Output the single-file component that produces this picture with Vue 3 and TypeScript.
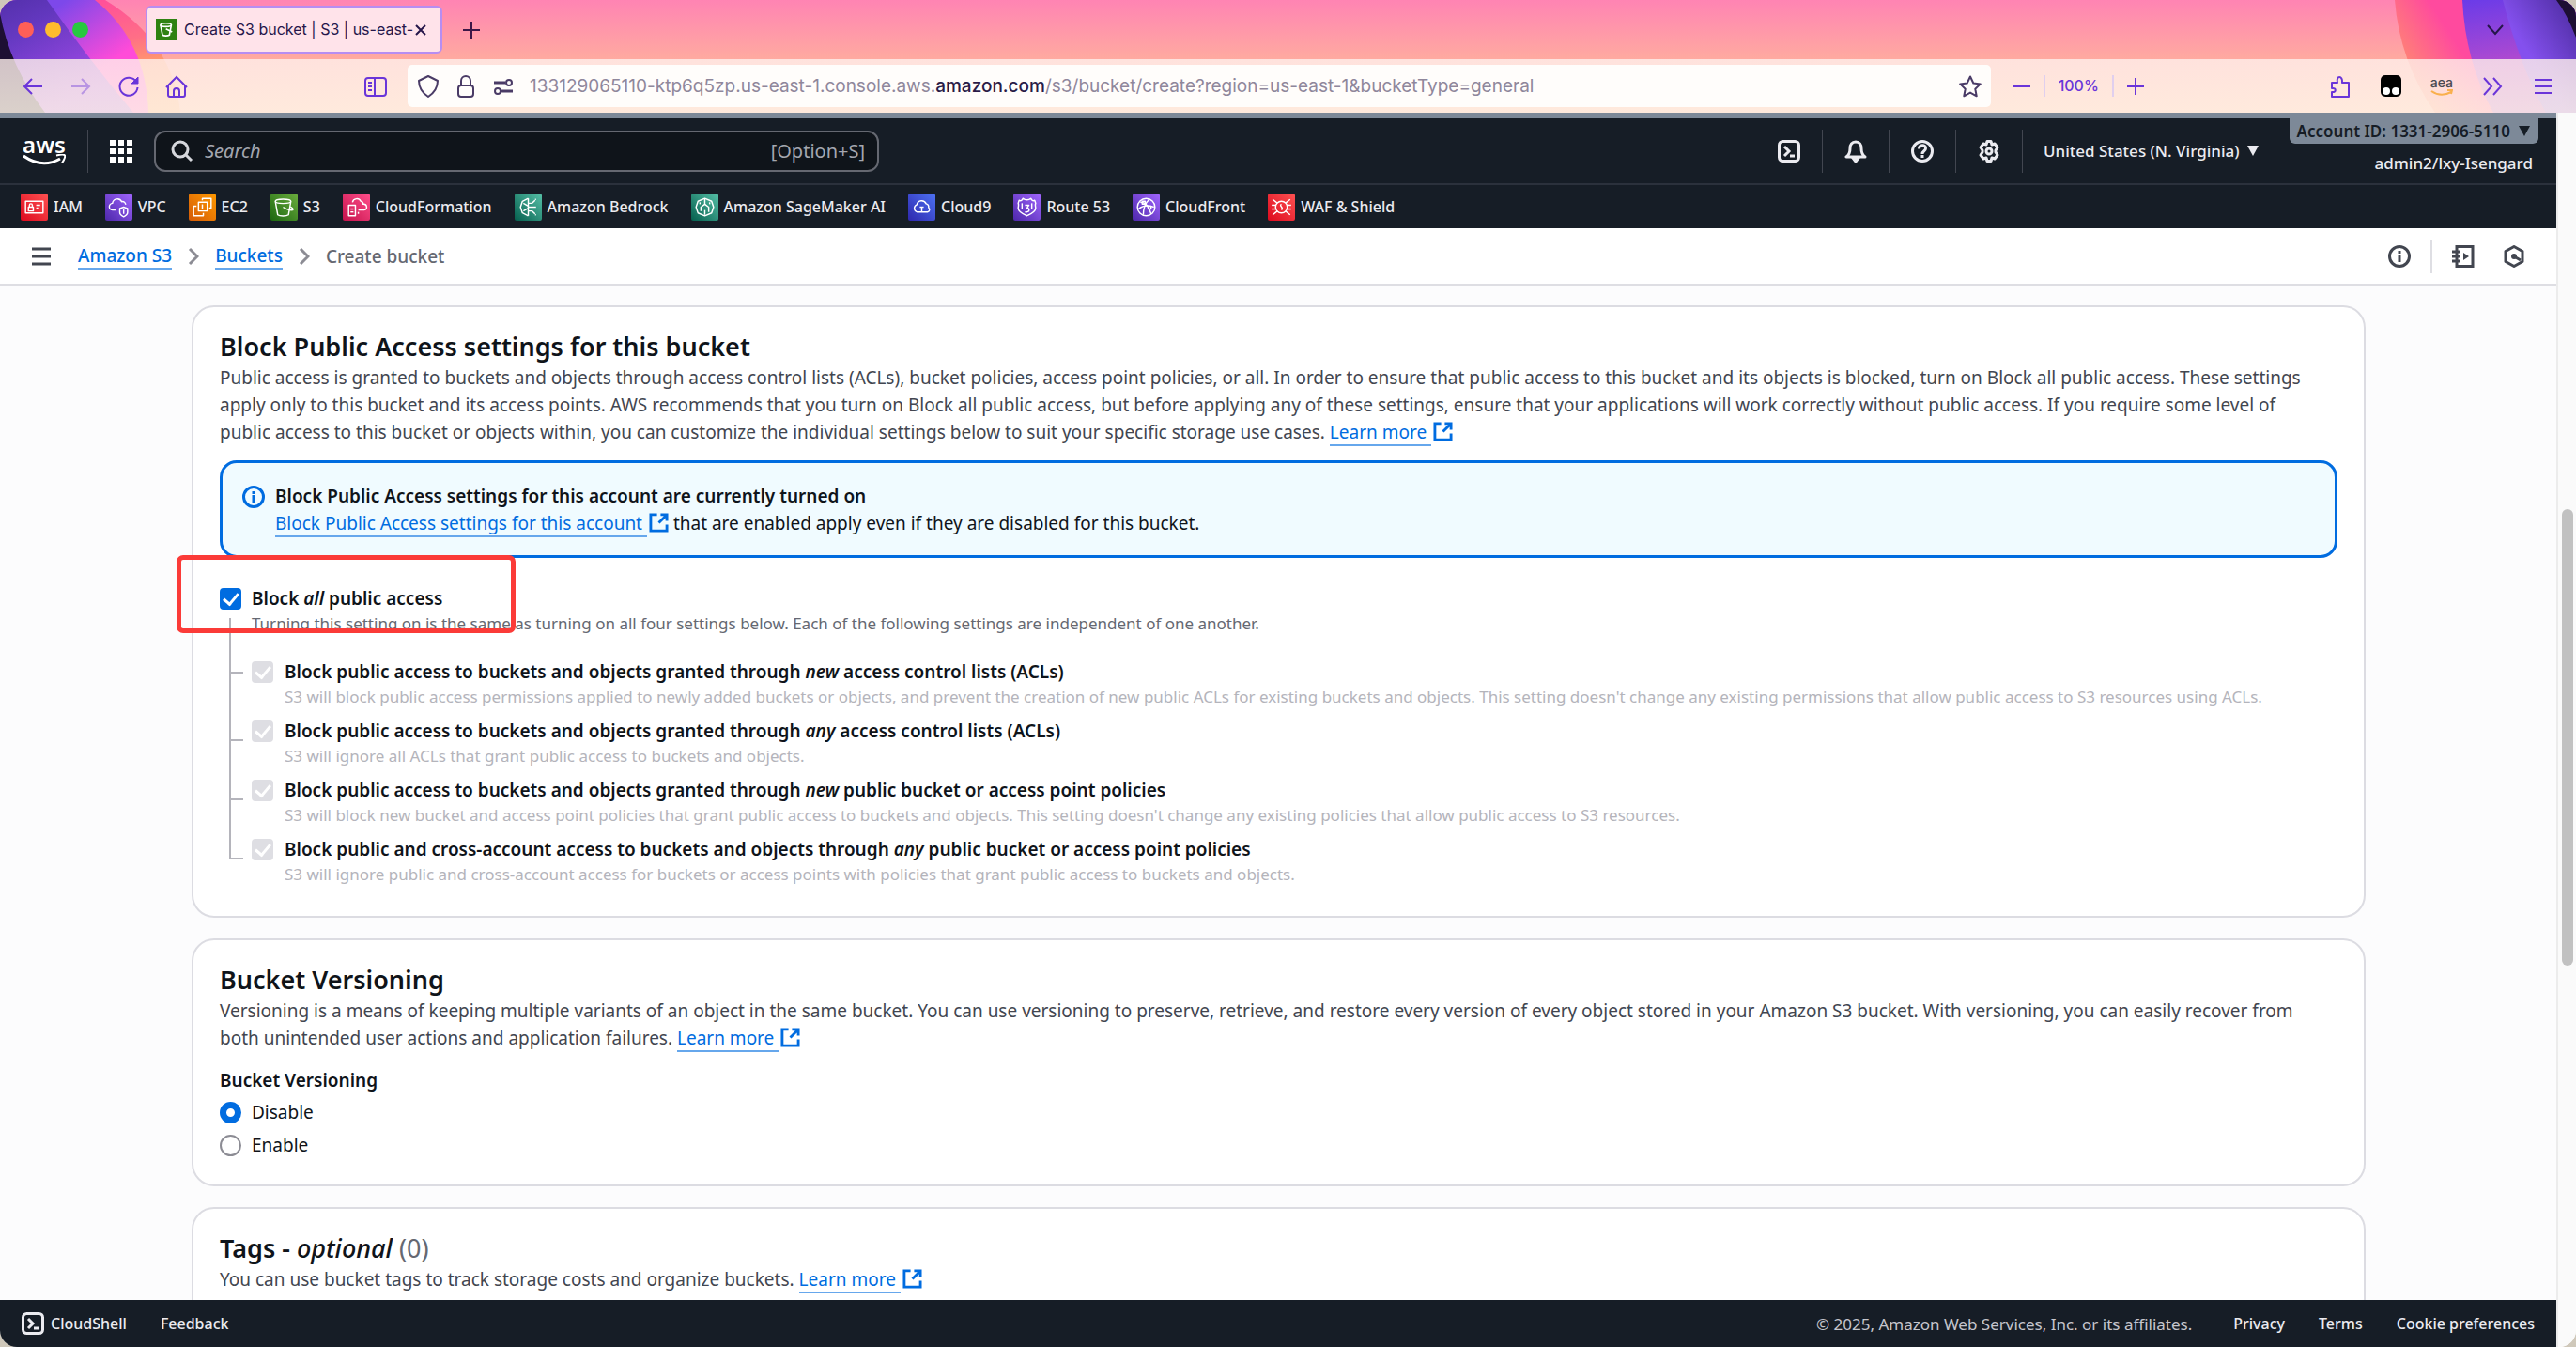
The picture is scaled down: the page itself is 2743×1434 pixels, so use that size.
<script setup lang="ts">
import { ref } from 'vue'

interface Service {
  name: string
  from: string
  to: string
  paths: string[]
}

interface Rule {
  id: string
  before: string
  em: string
  after: string
  note: string
}

const services: Service[] = [
  { name: 'IAM', from: '#ff5252', to: '#dd0a1e', paths: ['M5 8h18v12H5z', 'M8 14h5v4H8z', 'M9 14v-2a1.500 1.500 0 0 1 3 0v2', 'M16 12h4', 'M16 15h2'] },
  { name: 'VPC', from: '#a166ff', to: '#4d27aa', paths: ['M11 17H8a3.500 3.500 0 0 1-.5-7 5 5 0 0 1 9.500-1.500 3 3 0 0 1 4 3', 'M19 14l4 1.500v4c0 2-2 3.500-4 4.500-2-1-4-2.500-4-4.500v-4z', 'M19 16v5'] },
  { name: 'EC2', from: '#ff9900', to: '#d45b07', paths: ['M10 9h9v9h-9z', 'M8 13H5v10h10v-3', 'M14 7V5h9v10h-2', 'M14 11v5'] },
  { name: 'S3', from: '#6cae3e', to: '#1b660f', paths: ['M5 8l2.500 14c2 1.500 9 1.500 11 0L21 8', 'M5 8c0-3 16-3 16 0s-16 3-16 0', 'M13 14c3 2 7 3.500 10 3 1-1-1-2.500-2.500-3.500'] },
  { name: 'CloudFormation', from: '#ff4f8b', to: '#c5124c', paths: ['M6 12h7v11H6z', 'M8 16h3', 'M8 19h3', 'M10 9a4.500 4.500 0 0 1 8.500-1A3 3 0 0 1 21 11a3 3 0 0 1 1 6h-6', 'M16 19v2'] },
  { name: 'Amazon Bedrock', from: '#56c0a7', to: '#055f4e', paths: ['M14 5v18', 'M14 5l-6 3-2 6 2 6 6 3', 'M9 10l5 3', 'M9 18l5-3', 'M14 10h4l3-3', 'M14 14h8', 'M14 18h4l3 3', 'M21 6h1', 'M21 22h1'] },
  { name: 'Amazon SageMaker AI', from: '#56c0a7', to: '#055f4e', paths: ['M14 5l7 3 2 6-2 6-7 3-7-3-2-6 2-6z', 'M14 5v6l-4 3v4', 'M14 11l4 3v5', 'M9 9v2', 'M19 9v2', 'M14 17v5'] },
  { name: 'Cloud9', from: '#4d72f3', to: '#2e27ad', paths: ['M9 19a4 4 0 0 1 0-7.500 5 5 0 0 1 9.500-1 3.500 3.500 0 0 1 2.500 4 2.500 2.500 0 0 1-1 4.500z', 'M14 14v5', 'M12 14h4'] },
  { name: 'Route 53', from: '#a166ff', to: '#4d27aa', paths: ['M6 7c2 1 3 0 4-2 2 2 6 2 8 0 1 2 2 3 4 2l1 3c-1 2 0 3 0 5 0 4-5 6-9 8-4-2-9-4-9-8 0-2 1-3 0-5z', 'M12 12h4l-2 3c3 0 3 4 0 4h-2', 'M9 10v6', 'M19 10v6'] },
  { name: 'CloudFront', from: '#a166ff', to: '#4d27aa', paths: ['M14 5a9 9 0 1 1 0 18 9 9 0 0 1 0-18', 'M8 9c5 0 9 5 11 12', 'M17 6c-3 3-6 8-6 16', 'M6 16c5-4 11-4 16-2', 'M16 13h3v3h-3z', 'M10 8h3v3h-3z'] },
  { name: 'WAF & Shield', from: '#ff5252', to: '#dd0a1e', paths: ['M14 8a6 6 0 1 1 0 12 6 6 0 0 1 0-12', 'M14 11c-3 2 3 3 0 6', 'M5 6l5 4', 'M23 6l-5 4', 'M5 22l5-4', 'M23 22l-5-4', 'M4 12h4', 'M4 16h4', 'M20 12h4', 'M20 16h4'] },
]

const rules: Rule[] = [
  {
    id: 'new-acl',
    before: 'Block public access to buckets and objects granted through ',
    em: 'new',
    after: ' access control lists (ACLs)',
    note: "S3 will block public access permissions applied to newly added buckets or objects, and prevent the creation of new public ACLs for existing buckets and objects. This setting doesn't change any existing permissions that allow public access to S3 resources using ACLs.",
  },
  {
    id: 'any-acl',
    before: 'Block public access to buckets and objects granted through ',
    em: 'any',
    after: ' access control lists (ACLs)',
    note: 'S3 will ignore all ACLs that grant public access to buckets and objects.',
  },
  {
    id: 'new-policy',
    before: 'Block public access to buckets and objects granted through ',
    em: 'new',
    after: ' public bucket or access point policies',
    note: "S3 will block new bucket and access point policies that grant public access to buckets and objects. This setting doesn't change any existing policies that allow public access to S3 resources.",
  },
  {
    id: 'any-policy',
    before: 'Block public and cross-account access to buckets and objects through ',
    em: 'any',
    after: ' public bucket or access point policies',
    note: 'S3 will ignore public and cross-account access for buckets or access points with policies that grant public access to buckets and objects.',
  },
]

const blockAll = ref(true)
const versioning = ref('disable')
const query = ref('')
</script>

<template>
  <div class="window">
    <header class="chrome">
      <svg class="decor left" viewBox="0 0 200 120" aria-hidden="true">
        <defs>
          <linearGradient id="dl1" x1="0.55" y1="0" x2="0.75" y2="0.6"><stop offset="0" stop-color="#ff4f9a" /><stop offset="0.6" stop-color="#ff6f86" /><stop offset="1" stop-color="#ff9a6c" /></linearGradient>
          <linearGradient id="dl2" x1="0.35" y1="0" x2="0.8" y2="0.5"><stop offset="0.1" stop-color="#7d48ea" /><stop offset="1" stop-color="#ff4bd8" /></linearGradient>
          <linearGradient id="dl3" x1="0" y1="0" x2="0.5" y2="0.9"><stop offset="0" stop-color="#4a2a9c" /><stop offset="1" stop-color="#8a4cf0" /></linearGradient>
        </defs>
        <path d="M0 0H112Q184 44 192 120H0z" fill="url(#dl1)" />
        <path d="M0 0H101Q156 44 158 120H0z" fill="url(#dl2)" />
        <path d="M0 0H50Q92 60 142 120H0z" fill="url(#dl3)" opacity="0.8" />
        <path d="M0 14Q10 70 48 120H0z" fill="#1d0f33" />
      </svg>
      <svg class="decor right" viewBox="0 0 200 120" aria-hidden="true">
        <defs>
          <linearGradient id="dr1" x1="0" y1="0.4" x2="1" y2="0"><stop offset="0" stop-color="#ff8276" /><stop offset="0.3" stop-color="#ff4a9e" /></linearGradient>
          <linearGradient id="dr2" x1="0" y1="0" x2="0.1" y2="0.6"><stop offset="0" stop-color="#6a3be8" /><stop offset="1" stop-color="#b04ad0" /></linearGradient>
          <linearGradient id="dr3" x1="1" y1="0" x2="0.3" y2="0.7"><stop offset="0" stop-color="#4a2a9c" /><stop offset="0.8" stop-color="#8450ee" /></linearGradient>
        </defs>
        <path d="M7 0Q12 65 50 120H200V0z" fill="url(#dr1)" />
        <path d="M79 0Q82 65 112 120H200V0z" fill="url(#dr2)" />
        <path d="M122 0Q140 70 168 120H200V0z" fill="url(#dr3)" />
        <path d="M179 0Q190 14 200 40V0z" fill="#1d0f33" />
      </svg>

      <div class="tabs">
        <div class="lights"><i class="red" /><i class="amber" /><i class="green" /></div>
        <div class="tab">
          <svg class="favicon" viewBox="0 0 28 28"><rect width="28" height="28" fill="#2f8212" /><g fill="none" stroke="#fff" stroke-width="2"><path d="M6 8l2.500 13c2 1.500 7 1.500 9 0L20 8" /><path d="M6 8c0-3 14-3 14 0s-14 3-14 0M13 13l8 4" /></g></svg>
          <span class="tab-title">Create S3 bucket | S3 | us-east-</span>
          <button class="bare" aria-label="Close tab"><svg width="14" height="14" viewBox="0 0 14 14"><path d="M2 2l10 10M12 2L2 12" stroke="#26164a" stroke-width="2" /></svg></button>
        </div>
        <button class="bare" aria-label="New tab"><svg width="18" height="18" viewBox="0 0 18 18"><path d="M9 0v18M0 9h18" stroke="#3c1747" stroke-width="2" /></svg></button>
        <span class="grow" />
        <button class="bare all-tabs" aria-label="List all tabs"><svg width="20" height="12" viewBox="0 0 20 12" fill="none"><path d="M2 1l8 9 8-9" stroke="#26164a" stroke-width="2" /></svg></button>
      </div>

      <div class="toolbar">
        <div class="nav">
          <button class="bare" aria-label="Back"><svg class="ic" viewBox="0 0 24 24"><path d="M22 12H3M11 4l-8 8 8 8" /></svg></button>
          <button class="bare dim" aria-label="Forward"><svg class="ic" viewBox="0 0 24 24"><path d="M2 12h19M13 4l8 8-8 8" /></svg></button>
          <button class="bare" aria-label="Reload"><svg class="ic" viewBox="0 0 24 24"><path d="M20 7a9.500 9.500 0 1 0 1.500 6" /><path d="M22 2v7h-7z" fill="currentColor" stroke-width="1" /></svg></button>
          <button class="bare" aria-label="Home"><svg class="ic" viewBox="0 0 24 24"><path d="M1 13L12 2l11 11M3 11v10a2 2 0 0 0 2 2h14a2 2 0 0 0 2-2V11M9 23v-6a3 3 0 0 1 6 0v6" /></svg></button>
        </div>
        <button class="bare side" aria-label="Sidebars"><svg class="ic" viewBox="0 0 24 24"><rect x="1" y="3" width="22" height="19" rx="3" /><path d="M11 3v19M4 8h4M4 12h4M4 16h4" /></svg></button>
        <div class="url">
          <svg class="ic ink" viewBox="0 0 24 24"><path d="M12 1l10 5c0 8-4 13-10 17C6 19 2 14 2 6z" stroke-linejoin="round" /></svg>
          <svg class="ic ink" viewBox="0 0 24 24"><rect x="4" y="11" width="16" height="12" rx="3" /><path d="M7 11V6a5 5 0 0 1 10 0v5" /></svg>
          <svg class="ic ink" viewBox="0 0 24 24"><path d="M2 8h12M10 17h12" stroke-width="3" /><circle cx="18" cy="8" r="3" /><circle cx="6" cy="17" r="3" /></svg>
          <div class="address">133129065110-ktp6q5zp.us-east-1.console.aws.<b>amazon.com</b>/s3/bucket/create?region=us-east-1&amp;bucketType=general</div>
          <button class="bare" aria-label="Bookmark"><svg class="ic ink" viewBox="0 0 24 24"><path d="M12 1.500l3.300 7 7.500.9-5.500 5.300 1.400 7.600-6.700-3.700-6.700 3.700 1.400-7.600L1.200 9.400l7.500-.9z" stroke-linejoin="round" /></svg></button>
        </div>
        <div class="zoom">
          <button class="bare" aria-label="Zoom out"><svg width="18" height="18" viewBox="0 0 18 18"><path d="M0 9h18" stroke="currentColor" stroke-width="2" /></svg></button>
          <i /><button class="bare level">100%</button><i />
          <button class="bare" aria-label="Zoom in"><svg width="18" height="18" viewBox="0 0 18 18"><path d="M0 9h18M9 0v18" stroke="currentColor" stroke-width="2" /></svg></button>
        </div>
        <span class="grow" />
        <div class="ext">
          <button class="bare" aria-label="Extensions"><svg class="ic" viewBox="0 0 24 24"><path d="M3 23v-5c5 1 5-5 0-4V8h6c-2-8 6-8 5 0h7v15z" stroke-linejoin="round" /></svg></button>
          <button class="bare" aria-label="Script manager"><svg width="24" height="24" viewBox="0 0 24 24"><rect x="1" width="22" height="23" rx="5" fill="#000" /><circle cx="7" cy="17" r="4" fill="#fff" /><circle cx="17" cy="17" r="4" fill="#fff" /></svg></button>
          <button class="bare aea" aria-label="aea">aea<svg width="24" height="8" viewBox="0 0 24 8" fill="none"><path d="M1 2q10 7 21 1M18 1l5 0-1 4" stroke="#f9b04d" stroke-width="2" /></svg></button>
          <button class="bare" aria-label="More tools"><svg class="ic" viewBox="0 0 24 24"><path d="M3 3l8 9-8 9M13 3l8 9-8 9" /></svg></button>
          <button class="bare" aria-label="Menu"><svg class="ic" viewBox="0 0 24 24"><path d="M3 5h18M3 12h18M3 19h18" /></svg></button>
        </div>
      </div>
    </header>

    <div class="view">
      <div class="page">
        <div class="aws-top">
          <a href="#" class="logo" aria-label="aws home">aws<svg width="46" height="14" viewBox="0 0 46 14" fill="none" stroke="#fff"><path d="M1 2q20 14 39 3" stroke-width="3" /><path d="M36 1.500q8-2 9 0t-3 8" stroke-width="2" /></svg></a>
          <i class="bar" />
          <button class="bare apps" aria-label="Services"><svg width="26" height="26" viewBox="0 0 26 26" fill="#fff"><path d="M1 1h6v6H1zM10 1h6v6h-6zM19 1h6v6h-6zM1 10h6v6H1zM10 10h6v6h-6zM19 10h6v6h-6zM1 19h6v6H1zM10 19h6v6h-6zM19 19h6v6h-6z" /></svg></button>
          <label class="search">
            <svg width="24" height="24" viewBox="0 0 24 24" fill="none" stroke="#d5d7dc" stroke-width="3"><circle cx="10" cy="10" r="8" /><path d="M16 16l6 6" /></svg>
            <input v-model="query" type="text" placeholder="Search" aria-label="Search" />
            <span>[Option+S]</span>
          </label>
          <span class="grow" />
          <div class="tools">
            <button class="bare" aria-label="CloudShell"><svg class="ic" viewBox="0 0 24 24"><rect x="1.500" y="1.500" width="21" height="21" rx="4" /><path d="M7 7l5 5-5 5M13 17h5" /></svg></button>
            <i class="bar" />
            <button class="bare" aria-label="Notifications"><svg class="ic" viewBox="0 0 24 24"><path d="M12 2c-4 0-6 3-6 7 0 5-1 7-4 9h20c-3-2-4-4-4-9 0-4-2-7-6-7z" stroke-linejoin="round" /><path d="M9 19l3 4 3-4z" fill="currentColor" /></svg></button>
            <i class="bar" />
            <button class="bare" aria-label="Support"><svg class="ic" viewBox="0 0 24 24"><circle cx="12" cy="12" r="10.500" /><path d="M8.500 9.500c0-5 7-5 7-.5 0 3-3.500 2.500-3.500 6M12 16v3" /></svg></button>
            <i class="bar" />
            <button class="bare" aria-label="Settings"><svg class="ic" viewBox="0 0 24 24"><path d="M10 1.500h4l1 3.500 3-1 3 4-2 3v2l2 3-3 4-3-1-1 3.500h-4L9 19l-3 1-3-4 2-3v-2L3 8l3-4 3 1z" stroke-linejoin="round" /><circle cx="12" cy="12" r="3" /></svg></button>
            <i class="bar" />
          </div>
          <button class="bare region">United States (N. Virginia) <svg width="12" height="11" viewBox="0 0 12 11"><path d="M0 0h12L6 11z" fill="currentColor" /></svg></button>
          <div class="account">
            <button class="bare account-id">Account ID: 1331-2906-5110 <svg width="12" height="11" viewBox="0 0 12 11"><path d="M0 0h12L6 11z" fill="currentColor" /></svg></button>
            <span>admin2/lxy-Isengard</span>
          </div>
        </div>

        <nav class="favs" aria-label="Favorite services">
          <a v-for="(s, i) in services" :key="s.name" href="#">
            <svg width="29" height="29" viewBox="0 0 28 28">
              <defs><linearGradient :id="'svc' + i" x1="0" y1="1" x2="1" y2="0"><stop offset="0" :stop-color="s.to" /><stop offset="1" :stop-color="s.from" /></linearGradient></defs>
              <rect width="28" height="28" rx="2" :fill="'url(#svc' + i + ')'" />
              <path v-for="p in s.paths" :key="p" :d="p" fill="none" stroke="#fff" stroke-width="1.400" stroke-linejoin="round" />
            </svg>
            {{ s.name }}
          </a>
        </nav>

        <div class="crumbs">
          <button class="bare" aria-label="Open navigation"><svg width="20" height="20" viewBox="0 0 20 20"><path d="M0 2h20M0 10h20M0 18h20" stroke="#424650" stroke-width="3" /></svg></button>
          <nav aria-label="Breadcrumbs">
            <a href="#">Amazon S3</a>
            <svg width="12" height="20" viewBox="0 0 12 20" fill="none"><path d="M2 2l8 8-8 8" stroke="#8c8c94" stroke-width="3" /></svg>
            <a href="#">Buckets</a>
            <svg width="12" height="20" viewBox="0 0 12 20" fill="none"><path d="M2 2l8 8-8 8" stroke="#8c8c94" stroke-width="3" /></svg>
            <span>Create bucket</span>
          </nav>
          <span class="grow" />
          <button class="bare" aria-label="Info"><svg class="ic" viewBox="0 0 24 24"><circle cx="12" cy="12" r="10.500" /><path d="M12 10v8M12 6v3" /></svg></button>
          <i class="rule" />
          <button class="bare" aria-label="Tutorials"><svg class="ic" viewBox="0 0 24 24"><path d="M5 1.500h17v21H5zM0 7h8M0 12h8M0 17h8" /><path d="M12 8l6 4-6 4z" fill="currentColor" stroke="none" /></svg></button>
          <button class="bare hex" aria-label="Diagnostics"><svg class="ic" viewBox="0 0 24 24"><path d="M12 1.500l9 5v11l-9 5-9-5v-11z" stroke-linejoin="round" /><circle cx="12" cy="12" r="3" fill="currentColor" stroke="none" /><path d="M12 12l7 4" /></svg></button>
        </div>

        <main class="content">
          <section class="panel">
            <h2>Block Public Access settings for this bucket</h2>
            <p>
              Public access is granted to buckets and objects through access control lists (ACLs), bucket policies, access point policies, or all. In order to ensure that public access to this bucket and its objects is blocked, turn on Block all public access. These settings apply only to this bucket and its access points. AWS recommends that you turn on Block all public access, but before applying any of these settings, ensure that your applications will work correctly without public access. If you require some level of public access to this bucket or objects within, you can customize the individual settings below to suit your specific storage use cases.
              <a href="#" class="ext-link"><span>Learn more&nbsp;</span><svg viewBox="0 0 22 22"><path d="M9 2H2v18h18v-7M13 2h7v7M20 2l-9 9" /></svg></a>
            </p>
            <div class="alert">
              <svg class="ic" viewBox="0 0 24 24"><circle cx="12" cy="12" r="10.500" /><path d="M12 10v8M12 6v3" /></svg>
              <div>
                <strong>Block Public Access settings for this account are currently turned on</strong>
                <div><a href="#" class="ext-link"><span>Block Public Access settings for this account&nbsp;</span><svg viewBox="0 0 22 22"><path d="M9 2H2v18h18v-7M13 2h7v7M20 2l-9 9" /></svg></a> that are enabled apply even if they are disabled for this bucket.</div>
              </div>
            </div>
            <div class="block-all">
              <label class="choice"><input v-model="blockAll" type="checkbox" /><strong>Block <em>all</em> public access</strong></label>
              <div class="marker" />
            </div>
            <div class="tree">
              <div class="rail"><i /><i /><i /><i /></div>
              <div class="branches">
                <div class="note">Turning this setting on is the same as turning on all four settings below. Each of the following settings are independent of one another.</div>
                <ul>
                  <li v-for="r in rules" :key="r.id">
                    <input :id="r.id" type="checkbox" checked disabled />
                    <div>
                      <label :for="r.id">{{ r.before }}<em>{{ r.em }}</em>{{ r.after }}</label>
                      <small>{{ r.note }}</small>
                    </div>
                  </li>
                </ul>
              </div>
            </div>
          </section>

          <section class="panel">
            <h2>Bucket Versioning</h2>
            <p>
              Versioning is a means of keeping multiple variants of an object in the same bucket. You can use versioning to preserve, retrieve, and restore every version of every object stored in your Amazon S3 bucket. With versioning, you can easily recover from both unintended user actions and application failures.
              <a href="#" class="ext-link"><span>Learn more&nbsp;</span><svg viewBox="0 0 22 22"><path d="M9 2H2v18h18v-7M13 2h7v7M20 2l-9 9" /></svg></a>
            </p>
            <fieldset>
              <legend>Bucket Versioning</legend>
              <label class="choice"><input v-model="versioning" type="radio" name="versioning" value="disable" />Disable</label>
              <label class="choice"><input v-model="versioning" type="radio" name="versioning" value="enable" />Enable</label>
            </fieldset>
          </section>

          <section class="panel">
            <h2>Tags - <em>optional</em> <span class="count">(0)</span></h2>
            <p>
              You can use bucket tags to track storage costs and organize buckets.
              <a href="#" class="ext-link"><span>Learn more&nbsp;</span><svg viewBox="0 0 22 22"><path d="M9 2H2v18h18v-7M13 2h7v7M20 2l-9 9" /></svg></a>
            </p>
          </section>
        </main>

        <footer>
          <button class="bare shell"><svg class="ic" viewBox="0 0 24 24"><rect x="1.500" y="1.500" width="21" height="21" rx="4" /><path d="M7 7l5 5-5 5M13 17h5" /></svg>CloudShell</button>
          <button class="bare">Feedback</button>
          <span class="grow" />
          <span class="copy">© 2025, Amazon Web Services, Inc. or its affiliates.</span>
          <a href="#">Privacy</a>
          <a href="#">Terms</a>
          <a href="#">Cookie preferences</a>
        </footer>
      </div>
      <div class="scroll"><i /></div>
    </div>
  </div>
</template>

<style>
html,
body,
#app {
  height: 100%;
}
body {
  margin: 0;
  background: #cfc8ba;
  overflow: hidden;
}
</style>

<style scoped>
.window {
  height: 100vh;
  display: flex;
  flex-direction: column;
  overflow: hidden;
  border-radius: 18px;
  background: #fcfcfd;
  color: #0f141a;
  font: 19px/29px 'Noto Sans', 'Open Sans', sans-serif;
}
.window * {
  box-sizing: border-box;
}
svg {
  display: block;
  flex: none;
}
.ic {
  width: 24px;
  height: 24px;
  fill: none;
  stroke: currentColor;
  stroke-width: 2;
}
.page .ic {
  stroke-width: 3;
}
.bare {
  display: flex;
  align-items: center;
  padding: 0;
  border: 0;
  background: none;
  color: inherit;
  font: inherit;
  white-space: nowrap;
}
.grow {
  flex: 1;
}

.chrome {
  position: relative;
  flex: none;
  background: linear-gradient(#ff84b3, #ffaaa0 63px);
  font-family: Inter, sans-serif;
}
.decor {
  position: absolute;
  top: 0;
  width: 200px;
  height: 120px;
}
.decor.left {
  left: 0;
}
.decor.right {
  right: 0;
}
.tabs {
  position: relative;
  height: 63px;
  display: flex;
  align-items: center;
  padding: 0 76px 0 19px;
}
.lights {
  display: flex;
  gap: 12px;
  width: 136px;
}
.lights i {
  width: 17px;
  height: 17px;
  border-radius: 50%;
}
.red {
  background: #ff5f57;
}
.amber {
  background: #febc2e;
}
.green {
  background: #28c840;
}
.tab {
  display: flex;
  align-items: center;
  gap: 7px;
  width: 316px;
  height: 51px;
  margin-right: 22px;
  padding: 0 14px 0 9px;
  border: 2px solid #b68df2;
  border-radius: 6px;
  background: #ffe3ea;
  color: #26164a;
  font-size: 16px;
}
.favicon {
  width: 23px;
  height: 23px;
}
.tab-title {
  flex: 1;
  min-width: 0;
  white-space: nowrap;
}
.toolbar {
  position: relative;
  height: 57px;
  display: flex;
  align-items: center;
  padding: 0 23px;
  background: linear-gradient(rgba(255, 240, 236, 0.8), rgba(255, 246, 232, 0.84));
  color: #6a35d9;
}
.nav {
  display: flex;
  gap: 27px;
}
.dim {
  opacity: 0.4;
}
.side {
  margin: 0 22px 0 188px;
}
.url {
  display: flex;
  align-items: center;
  gap: 16px;
  width: 62.500%;
  height: 45px;
  padding: 0 10px;
  border-radius: 5px;
  background: #fffdfb;
  color: #8f879b;
  font-size: 19px;
}
.url .ink {
  color: #4a3b66;
}
.address {
  flex: 1;
  white-space: nowrap;
}
.address b {
  color: #2a1b47;
  font-weight: 500;
}
.zoom {
  display: flex;
  align-items: center;
  gap: 14px;
  margin-left: 24px;
  font-size: 16px;
}
.zoom i {
  width: 2px;
  height: 23px;
  background: #e0cfee;
}
.level {
  font-weight: 500;
}
.ext {
  display: flex;
  align-items: center;
  gap: 30px;
}
.aea {
  flex-direction: column;
  color: #4a4a52;
  font-size: 14px;
  font-weight: 500;
  line-height: 14px;
}

.view {
  flex: 1;
  min-height: 0;
  display: flex;
}
.page {
  flex: 1;
  min-width: 0;
  display: flex;
  flex-direction: column;
}
.aws-top {
  flex: none;
  height: 75px;
  display: flex;
  align-items: center;
  padding-right: 19px;
  border-top: 6px solid #7d8998;
  background: #161d26;
  color: #ebebf0;
  font-size: 17px;
  font-weight: 500;
}
.logo {
  width: 46px;
  margin-left: 24px;
  color: #fff;
  font-size: 24px;
  font-weight: 600;
  line-height: 20px;
  text-align: center;
  text-decoration: none;
}
.bar {
  flex: none;
  width: 1px;
  height: 46px;
  background: #424650;
}
.logo + .bar {
  margin-left: 23px;
}
.apps {
  margin: 0 22px 0 22px;
}
.search {
  display: flex;
  align-items: center;
  gap: 10px;
  width: 772px;
  height: 44px;
  padding: 0 13px 0 16px;
  border: 2px solid #656871;
  border-radius: 12px;
  background: #0f141a;
  color: #a4a7b0;
  font-size: 20px;
  font-weight: 400;
}
.search input {
  flex: 1;
  border: 0;
  outline: 0;
  background: none;
  color: #fff;
  font: inherit;
}
.search input::placeholder {
  color: #a4a7b0;
  font-style: italic;
}
.tools {
  display: flex;
  align-items: center;
  gap: 23px;
}
.region {
  gap: 8px;
  margin-left: 22px;
}
.account {
  align-self: flex-start;
  display: flex;
  flex-direction: column;
  align-items: flex-end;
  gap: 6px;
  margin-left: 33px;
}
.account > span {
  padding-right: 6px;
}
.account-id {
  gap: 9px;
  height: 27px;
  padding: 0 9px 0 8px;
  border-radius: 0 0 6px 6px;
  background: #7d8998;
  color: #161d26;
  font-weight: 600;
}
.favs {
  flex: none;
  height: 48px;
  display: flex;
  align-items: center;
  gap: 24px;
  padding-left: 22px;
  border-top: 2px solid #2b313c;
  background: #161d26;
}
.favs a {
  display: flex;
  align-items: center;
  gap: 6px;
  color: #ebebf0;
  font-size: 16px;
  font-weight: 500;
  text-decoration: none;
  white-space: nowrap;
}
.crumbs {
  flex: none;
  height: 61px;
  display: flex;
  align-items: center;
  padding: 1px 33px 0 34px;
  border-bottom: 2px solid #dedee3;
  background: #fff;
  color: #424650;
}
.crumbs nav {
  display: flex;
  align-items: center;
  gap: 17px;
  margin-left: 29px;
  font-weight: 500;
}
.crumbs nav a {
  border-bottom: 2px solid #66a7ec;
  color: #006ce0;
  line-height: 26px;
  text-decoration: none;
}
.crumbs nav span {
  color: #656871;
}
.rule {
  width: 2px;
  height: 35px;
  margin: 0 21px;
  background: #dedee3;
}
.hex {
  margin-left: 30px;
}

.content {
  flex: 1;
  min-height: 0;
  overflow: hidden;
  display: flex;
  flex-direction: column;
  gap: 22px;
  padding: 21px 203px 0 204px;
}
.panel {
  flex: none;
  padding: 25px 28px 27px;
  border: 2px solid #dcdce2;
  border-radius: 24px;
  background: #fff;
}
h2 {
  margin: 0 0 2px;
  font-size: 27px;
  font-weight: 600;
  line-height: 34px;
}
h2 em {
  font-weight: 500;
}
.count {
  color: #656871;
  font-weight: 400;
}
p {
  margin: 0;
  padding-right: 20px;
  color: #424650;
}
strong {
  font-weight: 600;
}
.ext-link {
  color: #006ce0;
  text-decoration: none;
  white-space: nowrap;
}
.ext-link span {
  border-bottom: 2px solid #66a7ec;
}
.ext-link svg {
  display: inline-block;
  width: 21px;
  height: 21px;
  margin-left: 2px;
  vertical-align: -3px;
  fill: none;
  stroke: currentColor;
  stroke-width: 3;
}
.alert {
  display: flex;
  gap: 11px;
  margin-top: 15px;
  padding: 21px 21px 19px;
  border: 3px solid #006ce0;
  border-radius: 18px;
  background: #f0fbff;
}
.alert .ic {
  margin-top: 3px;
  color: #006ce0;
}
.block-all {
  position: relative;
  margin-top: 29px;
}
.marker {
  position: absolute;
  top: -32px;
  left: -46px;
  width: 361px;
  height: 83px;
  border: 5px solid #fb3b38;
  border-radius: 7px;
}
.choice {
  display: flex;
  align-items: center;
  gap: 11px;
}
input[type='checkbox'],
input[type='radio'] {
  flex: none;
  display: grid;
  place-items: center;
  width: 23px;
  height: 23px;
  margin: 0;
  border: 2px solid #8c8c94;
  appearance: none;
  background: #fff;
}
input[type='checkbox'] {
  border-radius: 4px;
}
input[type='checkbox']:checked {
  border-color: #006ce0;
  background: #006ce0;
}
input[type='checkbox']:checked::after {
  content: '';
  width: 7px;
  height: 13px;
  margin-bottom: 4px;
  border: solid #fff;
  border-width: 0 3px 3px 0;
  transform: rotate(40deg);
}
input[type='checkbox']:disabled {
  border-color: #dedee3;
  background: #dedee3;
}
input[type='radio'] {
  border-radius: 50%;
}
input[type='radio']:checked {
  border: 7px solid #006ce0;
}
.tree {
  display: flex;
  margin-bottom: 6px;
}
.rail {
  flex: none;
  display: flex;
  flex-direction: column;
  width: 34px;
  padding: 6px 9px 0 10px;
}
.rail i {
  height: 63px;
  border: solid #b4b4bb;
  border-width: 0 0 2px 2px;
}
.rail i:first-child {
  height: 59px;
}
.rail i:nth-child(2) {
  height: 72px;
}
.note {
  color: #656871;
  font-size: 17px;
  line-height: 23px;
}
ul {
  display: flex;
  flex-direction: column;
  gap: 11px;
  margin: 26px 0 0;
  padding: 0;
  list-style: none;
}
li {
  display: flex;
  gap: 12px;
}
li input {
  margin-top: 3px !important;
}
li label {
  display: block;
  font-weight: 600;
}
small {
  display: block;
  color: #b4b4bb;
  font-size: 17px;
  line-height: 23px;
}
fieldset {
  display: flex;
  flex-direction: column;
  gap: 6px;
  margin: 16px 0 0;
  padding: 0;
  border: 0;
}
legend {
  padding: 0 0 5px;
  font-weight: 600;
}
footer {
  flex: none;
  height: 50px;
  display: flex;
  align-items: center;
  gap: 36px;
  padding: 0 23px;
  background: #161d26;
  color: #ebebf0;
  font-size: 16px;
  font-weight: 500;
}
footer a {
  color: inherit;
  text-decoration: none;
}
.shell {
  gap: 7px;
}
.copy {
  margin-right: 8px;
  color: #c6c6cd;
  font-size: 17px;
  font-weight: 400;
}
.scroll {
  flex: none;
  width: 21px;
  padding: 0 4px 0 4px;
  border-left: 2px solid #ececec;
  background: #fafafa;
}
.scroll i {
  display: block;
  width: 12px;
  height: 37%;
  margin-top: 422px;
  border-radius: 6px;
  background: #c1c1c1;
}
</style>
